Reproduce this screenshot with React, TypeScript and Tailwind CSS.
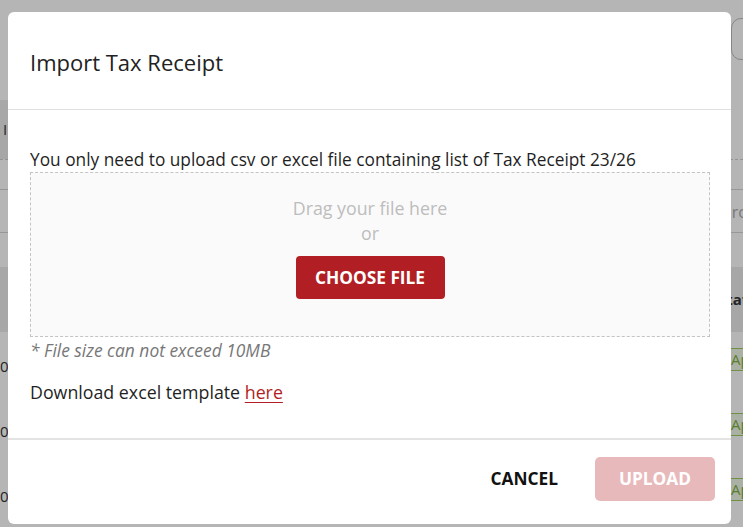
import * as React from "react";

const rows = ["07", "01", "09"];

function BackgroundPage() {
    return (
        <div className="flex h-[527px] w-[743px] flex-col overflow-hidden bg-white font-['Open_Sans',sans-serif] text-[#333]">
            <div className="flex h-[100px] shrink-0 justify-end pt-[18px]">
                <div className="mr-[-40px] h-[42px] w-[52px] rounded-[10px] border border-[#bdbdbd]" />
            </div>
            <div className="flex h-[60px] shrink-0 border-b border-dashed border-[#cfcfcf]">
                <div className="flex h-full w-[40px] items-center bg-[#ececec] pl-[3px] text-[15px]">I</div>
            </div>
            <div className="h-[30px] shrink-0 border-b border-[#d5d5d5]" />
            <div className="flex h-[43px] shrink-0 items-center justify-end border-b border-[#d5d5d5]">
                <span className="mr-[-28px] w-[66px] pt-[2px] text-[16px] text-[#aaa]">Search</span>
            </div>
            <div className="h-[34px] shrink-0" />
            <div className="flex h-[65px] shrink-0 items-center justify-end bg-[#ececec] text-[15px] font-bold">
                <span className="mr-[-26px] w-[51px]">Status</span>
            </div>
            {rows.map((d) => (
                <div key={d} className="flex h-[65px] shrink-0 justify-between">
                    <span className="pt-[23px] text-[15px]">{d}</span>
                    <span className="mt-[16px] mr-[-60px] h-[23px] w-[72px] border-y border-[#9ccc65] bg-[#f1f8e9] text-[15px] leading-[21px] text-[#7cb342]">
                        Approved
                    </span>
                </div>
            ))}
        </div>
    );
}

export default function App() {
    return (
        <div className="relative h-[527px] w-[743px] overflow-hidden">
            <BackgroundPage />
            <div className="absolute inset-0 bg-black/[0.29]" />

            <div className="absolute left-[8px] top-[12px] flex h-[512px] w-[723px] flex-col rounded-[6px] bg-white font-['Open_Sans',sans-serif] text-[#1a1a1a]">
                <div className="flex h-[98px] shrink-0 items-center border-b border-[#e0e0e0] px-[22px]">
                    <h2 className="pt-[2px] text-[22px] font-normal leading-[30px] text-[#222]">Import Tax Receipt</h2>
                </div>

                <div className="flex shrink-0 flex-col border-b-2 border-[#e3e3e3] px-[22px] pb-[33px] pt-[38px]">
                    <p className="whitespace-nowrap text-[17.3px] leading-[24px] text-[#1f1f1f]">
                        You only need to upload csv or excel file containing list of Tax Receipt 23/26
                    </p>
                    <div className="flex h-[165px] w-[680px] flex-col items-center border border-dashed border-[#c4c4c4] bg-[#fafafa] pt-[23px]">
                        <span className="text-[17.8px] leading-[25px] text-[#bdbdbd]">Drag your file here</span>
                        <span className="text-[17.8px] leading-[25px] text-[#bdbdbd]">or</span>
                        <button
                            type="button"
                            className="mt-[10px] flex h-[43px] w-[149px] items-center justify-center rounded-[4px] bg-[#b11f24] text-[17.3px] font-bold text-white"
                        >
                            CHOOSE FILE
                        </button>
                    </div>
                    <p className="text-[17.4px] italic leading-[26px] text-[#777]">* File size can not exceed 10MB</p>
                    <p className="mt-[16px] text-[17.8px] leading-[26px] text-[#1f1f1f]">
                        Download excel template{" "}
                        <a href="#" className="text-[#b11f24] underline underline-offset-[3px]">
                            here
                        </a>
                    </p>
                </div>

                <div className="flex flex-1 items-start justify-end gap-[21px] pr-[16px] pt-[17px]">
                    <button
                        type="button"
                        className="flex h-[44px] items-center px-[16px] text-[17.3px] font-bold text-[#111]"
                    >
                        CANCEL
                    </button>
                    <button
                        type="button"
                        disabled
                        className="flex h-[44px] w-[120px] items-center justify-center rounded-[5px] bg-[#e8b9ba] text-[17.3px] font-bold text-white"
                    >
                        UPLOAD
                    </button>
                </div>
            </div>
        </div>
    );
}
